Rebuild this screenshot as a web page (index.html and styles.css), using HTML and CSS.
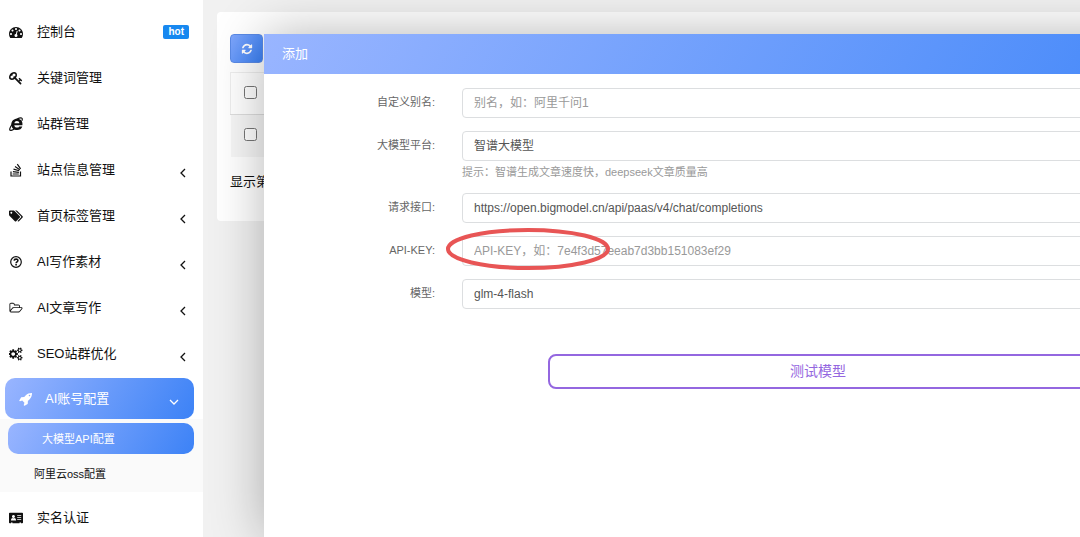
FILE: index.html
```html
<!DOCTYPE html>
<html lang="zh-CN">
<head>
    <meta charset="UTF-8">
    <meta name="viewport" content="width=device-width, initial-scale=1.0">
    <title>大模型API配置</title>
    <link rel="stylesheet" href="styles.css">
</head>
<body>
<!-- Sidebar -->
<nav class="sidebar">
    <ul class="menu">
        <li><a class="menu-item" href="#">
            <svg class="icon" viewBox="0 0 1792 1792"><path d="M384 1152q0-53-37.5-90.5t-90.5-37.5-90.5 37.5-37.5 90.5 37.5 90.5 90.5 37.5 90.5-37.5 37.5-90.5zm192-448q0-53-37.5-90.5t-90.5-37.5-90.5 37.5-37.5 90.5 37.5 90.5 90.5 37.5 90.5-37.5 37.5-90.5zm428 481l101-382q6-26-7.5-48.5t-38.5-29.5-48 6.5-30 39.5l-101 382q-60 5-107 43.5t-63 98.5q-20 77 20 146t117 89 146-20 89-117q16-60-6-117t-72-91zm660-33q0-53-37.5-90.5t-90.5-37.5-90.5 37.5-37.5 90.5 37.5 90.5 90.5 37.5 90.5-37.5 37.5-90.5zm-640-640q0-53-37.5-90.5t-90.5-37.5-90.5 37.5-37.5 90.5 37.5 90.5 90.5 37.5 90.5-37.5 37.5-90.5zm448 192q0-53-37.5-90.5t-90.5-37.5-90.5 37.5-37.5 90.5 37.5 90.5 90.5 37.5 90.5-37.5 37.5-90.5zm320 448q0 261-141 483-19 29-54 29h-1402q-35 0-54-29-141-221-141-483 0-182 71-348t191-286 286-191 348-71 348 71 286 191 191 286 71 348z"/></svg>
            <span class="menu-text">控制台</span>
            <span class="badge">hot</span>
        </a></li>
        <li><a class="menu-item" href="#">
            <svg class="icon" viewBox="0 0 1792 1792"><path d="M832 512q0-80-56-136t-136-56-136 56-56 136q0 42 19 83-41-19-83-19-80 0-136 56t-56 136 56 136 136 56 136-56 56-136q0-42-19-83 41 19 83 19 80 0 136-56t56-136zm851 704q0 17-49 66t-66 49q-9 0-28.5-16t-36.5-33-38.5-40-24.5-26l-96 96 220 220q28 28 28 68 0 42-39 81t-81 39q-40 0-68-28l-671-671q-176 131-365 131-163 0-265.5-102.5t-102.5-265.5q0-160 95-313t248-248 313-95q163 0 265.5 102.5t102.5 265.5q0 189-131 365l355 355 96-96q-3-3-26-24.5t-40-38.5-33-36.5-16-28.5q0-17 49-66t66-49q13 0 23 10 6 6 46 44.5t82 79.5 86.5 86 73 78 28.5 41z"/></svg>
            <span class="menu-text">关键词管理</span>
        </a></li>
        <li><a class="menu-item" href="#">
            <svg class="icon" viewBox="0 0 14 14"><path d="M5.300 8.300h8.100c.6-3.800-1.600-6.500-5.300-6.500-3.400 0-5.800 2.400-5.800 5.600s2.400 5.600 5.800 5.600c2.600 0 4.500-1.300 5.200-3.600h-3.100c-.4.800-1.100 1.200-2.100 1.200-1.600 0-2.700-.8-2.800-2.300zm.1-2c.2-1.400 1.200-2.200 2.500-2.200s2.300.8 2.500 2.200z" fill-rule="evenodd"/><path class="line" d="M3.500 6C6 3 10.500.2 12.600 1c.9.400.8 1.500.3 2.700M3 7.500C.8 10.500.2 12.800 1.200 13.300c.9.400 2.700-.4 4-1.300"/></svg>
            <span class="menu-text">站群管理</span>
        </a></li>
        <li><a class="menu-item" href="#">
            <svg class="icon" viewBox="0 0 14 14"><path class="line" d="M2 8.500v4.500h9.500V8.500M3.700 11h6.100M3.900 8.600l6 .7M4.500 6.100l5.700 1.700M6 3.600l4.800 3.100M8.300 1.200l3.300 4.700"/></svg>
            <span class="menu-text">站点信息管理</span>
            <svg class="arrow" viewBox="0 0 10 10"><path d="M7 1L3 5l4 4"/></svg>
        </a></li>
        <li><a class="menu-item" href="#">
            <svg class="icon" viewBox="0 0 1920 1792"><path d="M448 448q0-53-37.5-90.5t-90.5-37.5-90.5 37.5-37.5 90.5 37.5 90.5 90.5 37.5 90.5-37.5 37.5-90.5zm1067 576q0 53-37 90l-491 492q-39 37-91 37-53 0-90-37l-715-716q-38-37-64.5-101t-26.500-117v-416q0-52 38-90t90-38h416q53 0 117 26.500t102 64.500l715 714q37 39 37 91zm384 0q0 53-37 90l-491 492q-39 37-91 37-36 0-59-14t-53-45l470-470q37-37 37-90 0-52-37-91l-715-714q-38-38-102-64.500t-117-26.500h224q53 0 117 26.500t102 64.500l715 714q37 39 37 91z"/></svg>
            <span class="menu-text">首页标签管理</span>
            <svg class="arrow" viewBox="0 0 10 10"><path d="M7 1L3 5l4 4"/></svg>
        </a></li>
        <li><a class="menu-item" href="#">
            <svg class="icon" viewBox="0 0 14 14"><circle class="line" cx="7" cy="7" r="5.300"/><path class="line bold" d="M5.100 5.700C5.300 3.600 8.900 3.600 8.900 5.600 8.900 6.800 7.100 6.800 7.100 8.200M7.100 9.100v1.500"/></svg>
            <span class="menu-text">AI写作素材</span>
            <svg class="arrow" viewBox="0 0 10 10"><path d="M7 1L3 5l4 4"/></svg>
        </a></li>
        <li><a class="menu-item" href="#">
            <svg class="icon" viewBox="0 0 2048 1792"><path d="M1845 931q0-35-53-35h-1088q-40 0-85.500 21.500t-71.500 52.500l-294 363q-18 24-18 40 0 35 53 35h1088q40 0 86-22t71-53l294-363q18-22 18-39zm-1141-163h768v-160q0-40-28-68t-68-28h-576q-40 0-68-28t-28-68v-64q0-40-28-68t-68-28h-320q-40 0-68 28t-28 68v853l256-315q44-53 116-87.500t140-34.500zm1269 163q0 62-46 120l-295 363q-43 53-116 87.500t-140 34.500h-1088q-92 0-158-66t-66-158v-960q0-92 66-158t158-66h320q92 0 158 66t66 158v32h544q92 0 158 66t66 158v160h192q54 0 99 24.500t67 70.500q15 32 15 68z"/></svg>
            <span class="menu-text">AI文章写作</span>
            <svg class="arrow" viewBox="0 0 10 10"><path d="M7 1L3 5l4 4"/></svg>
        </a></li>
        <li><a class="menu-item" href="#">
            <svg class="icon" viewBox="0 0 1920 1792"><path d="M832 896q0-106-75-181t-181-75-181 75-75 181 75 181 181 75 181-75 75-181zm768 512q0-52-38-90t-90-38-90 38-38 90q0 53 37.500 90.500t90.500 37.500 90.500-37.500 37.500-90.500zm0-1024q0-52-38-90t-90-38-90 38-38 90q0 53 37.500 90.500t90.500 37.500 90.500-37.500 37.500-90.500zm-384 421v185q0 10-7 19.500t-16 10.500l-155 24q-11 35-32 76 34 48 90 115 7 11 7 20 0 12-7 19-23 30-82.500 89.500t-78.500 59.500q-11 0-21-7l-115-90q-37 19-77 31-11 108-23 155-7 24-30 24h-186q-11 0-20-7.500t-10-17.500l-23-153q-34-10-75-31l-118 89q-7 7-20 7-11 0-21-8-144-133-144-160 0-9 7-19 10-14 41-53t47-61q-23-44-35-82l-152-24q-10-1-17-9.500t-7-19.500v-185q0-10 7-19.500t16-10.500l155-24q11-35 32-76-34-48-90-115-7-11-7-20 0-12 7-20 22-30 82-89t79-59q11 0 21 7l115 90q34-18 77-32 11-108 23-154 7-24 30-24h186q11 0 20 7.500t10 17.500l23 153q34 10 75 31l118-89q8-7 20-7 11 0 21 8 144 133 144 160 0 8-7 19-12 16-42 54t-45 60q23 48 34 82l152 23q10 2 17 10.500t7 19.500zm640 533v140q0 16-149 31-12 27-30 52 51 113 51 138 0 4-4 7-122 71-124 71-8 0-46-47t-52-68q-20 2-30 2t-30-2q-14 21-52 68t-46 47q-2 0-124-71-4-3-4-7 0-25 51-138-18-25-30-52-149-15-149-31v-140q0-16 149-31 13-29 30-52-51-113-51-138 0-4 4-7 4-2 35-20t59-34 30-16q8 0 46 46.500t52 67.500q20-2 30-2t30 2q51-71 92-112l6-2q4 0 124 70 4 3 4 7 0 25-51 138 17 23 30 52 149 15 149 31zm0-1024v140q0 16-149 31-12 27-30 52 51 113 51 138 0 4-4 7-122 71-124 71-8 0-46-47t-52-68q-20 2-30 2t-30-2q-14 21-52 68t-46 47q-2 0-124-71-4-3-4-7 0-25 51-138-18-25-30-52-149-15-149-31v-140q0-16 149-31 13-29 30-52-51-113-51-138 0-4 4-7 4-2 35-20t59-34 30-16q8 0 46 46.500t52 67.500q20-2 30-2t30 2q51-71 92-112l6-2q4 0 124 70 4 3 4 7 0 25-51 138 17 23 30 52 149 15 149 31z"/></svg>
            <span class="menu-text">SEO站群优化</span>
            <svg class="arrow" viewBox="0 0 10 10"><path d="M7 1L3 5l4 4"/></svg>
        </a></li>
        <li>
            <a class="menu-item active" href="#">
                <svg class="icon" viewBox="0 0 1792 1792"><path d="M1440 448q0-40-28-68t-68-28-68 28-28 68 28 68 68 28 68-28 28-68zm224-288q0 249-75.500 430.500t-253.500 360.500q-81 80-195 176l-20 379q-2 16-16 26l-384 224q-7 4-16 4-12 0-23-9l-64-64q-13-14-8-32l85-276-281-281-276 85q-3 1-9 1-14 0-23-9l-64-64q-17-19-5-39l224-384q10-14 26-16l379-20q96-114 176-195 188-187 358-258t431-71q14 0 24 9.500t10 22.500z"/></svg>
                <span class="menu-text">AI账号配置</span>
                <svg class="arrow" viewBox="0 0 10 10"><path d="M1 3l4 4 4-4"/></svg>
            </a>
            <ul class="submenu">
                <li><a class="submenu-item current" href="#">大模型API配置</a></li>
                <li><a class="submenu-item" href="#">阿里云oss配置</a></li>
            </ul>
        </li>
        <li><a class="menu-item" href="#">
            <svg class="icon" viewBox="0 0 14 14"><path fill-rule="evenodd" d="M.8 1.800h12.400q.8 0 .8.800v8.800q0 .8-.8.800h-1.200v-.6h-1.500v.6h-7v-.6h-1.500v.6H.8q-.8 0-.8-.8V2.600q0-.8.800-.8zM4.400 3.900a1.500 1.600 0 1 0 .1 0zM1.900 9.500h5.200q0-2.500-1.500-2.500-1.100.700-2.200 0-1.500 0-1.500 2.500zM8.200 4.200v.9h4v-.9zM8.200 6.200v.9h4v-.9zM8.200 8.200v.9h4v-.9z"/></svg>
            <span class="menu-text">实名认证</span>
        </a></li>
    </ul>
</nav>

<!-- List page behind the dialog -->
<main class="content">
    <section class="panel">
        <button class="refresh-btn" type="button" aria-label="刷新">
            <svg viewBox="0 0 1792 1792"><path d="M1639 1056q0 5-1 7-64 268-268 434.500t-478 166.500q-146 0-282.500-55t-243.500-157l-129 129q-19 19-45 19t-45-19-19-45v-448q0-26 19-45t45-19h448q26 0 45 19t19 45-19 45l-137 137q71 66 161 102t187 36q134 0 250-65t186-179q11-17 53-117 8-23 30-23h192q13 0 22.500 9.500t9.500 22.500zm25-800v448q0 26-19 45t-45 19h-448q-26 0-45-19t-19-45 19-45l138-138q-148-137-349-137-134 0-250 65t-186 179q-11 17-53 117-8 23-30 23h-199q-13 0-22.500-9.500t-9.500-22.500v-7q65-268 270-434.500t480-166.500q146 0 284 55.500t245 156.500l130-129q19-19 45-19t45 19 19 45z"/></svg>
        </button>
        <table class="list">
            <thead>
                <tr><th><input type="checkbox" aria-label="全选"></th></tr>
            </thead>
            <tbody>
                <tr><td><input type="checkbox" aria-label="选择"></td></tr>
            </tbody>
        </table>
        <p class="page-info">显示第</p>
    </section>
</main>

<!-- Add dialog -->
<div class="dialog" role="dialog" aria-labelledby="dialog-title">
    <h2 class="dialog-title" id="dialog-title">添加</h2>
    <form class="form">
        <div class="form-row">
            <label for="alias">自定义别名:</label>
            <input class="field" type="text" id="alias" placeholder="别名，如：阿里千问1">
        </div>
        <div class="form-row">
            <label for="platform">大模型平台:</label>
            <div class="field-group">
                <select class="field" id="platform">
                    <option>智谱大模型</option>
                </select>
                <p class="hint">提示：智谱生成文章速度快，deepseek文章质量高</p>
            </div>
        </div>
        <div class="form-row">
            <label for="api-url">请求接口:</label>
            <input class="field" type="text" id="api-url" value="https://open.bigmodel.cn/api/paas/v4/chat/completions">
        </div>
        <div class="form-row marked">
            <label for="api-key">API-KEY:</label>
            <input class="field" type="text" id="api-key" placeholder="API-KEY，如：7e4f3d57eeab7d3bb151083ef29">
            <svg class="marker" viewBox="0 0 166 44"><ellipse cx="83" cy="22" rx="80" ry="19"/></svg>
        </div>
        <div class="form-row">
            <label for="model">模型:</label>
            <input class="field" type="text" id="model" value="glm-4-flash">
        </div>
        <button class="test-btn" type="button">测试模型</button>
    </form>
</div>
</body>
</html>
```

FILE: styles.css
```css
:root {
    --blue-start: #99b5ff;
    --blue-end: #3c82f6;
    --purple: #9467e0;
    --border: #dcdee0;
    --text: #111;
}

* {
    box-sizing: border-box;
}

body {
    margin: 0;
    min-height: 100vh;
    display: flex;
    position: relative;
    overflow: hidden;
    font-family: "Liberation Sans", "Noto Sans CJK SC", sans-serif;
    font-size: 13px;
    color: var(--text);
    background: #f1f1f1;
}

ul {
    margin: 0;
    padding: 0;
    list-style: none;
}

a {
    color: inherit;
    text-decoration: none;
}

button, input, select {
    font-family: inherit;
}

/* Sidebar */
.sidebar {
    width: 203px;
    height: 100vh;
    flex-shrink: 0;
    overflow: hidden;
    background: #fff;
    z-index: 3;
}

.menu {
    padding-top: 9px;
}

.menu-item {
    display: flex;
    align-items: center;
    height: 46px;
    padding: 0 14px 1px 9px;
}

.icon {
    width: 14px;
    height: 14px;
    margin-right: 14px;
    fill: currentColor;
}

.icon .line {
    fill: none;
    stroke: currentColor;
    stroke-width: 1.2;
}

.icon .bold {
    stroke-width: 1.6;
}

.menu-text {
    flex: 1;
    padding-bottom: 2px;
}

.badge {
    padding: 0 5px;
    border-radius: 2px;
    font-size: 10px;
    line-height: 14px;
    font-weight: bold;
    color: #fff;
    background: #1788f0;
}

.arrow {
    width: 10px;
    height: 10px;
    margin: 7px 1px 0 0;
    fill: none;
    stroke: currentColor;
    stroke-width: 1.3;
}

.menu-item.active {
    height: 41px;
    margin: 1px 9px 0 5px;
    padding: 0 14px;
    border-radius: 10px;
    color: #fff;
    background: linear-gradient(120deg, var(--blue-start), var(--blue-end));
}

.active .icon {
    margin-right: 12px;
}

.submenu {
    padding: 4px 9px 0 8px;
    margin-bottom: 3px;
    background: #fafafa;
}

.submenu-item {
    display: flex;
    align-items: center;
    height: 38px;
    padding: 0 0 1px 26px;
    font-size: 11px;
}

.submenu-item.current {
    height: 31px;
    padding-left: 34px;
    border-radius: 10px;
    color: #fff;
    background: linear-gradient(120deg, var(--blue-start), var(--blue-end));
}

/* List page */
.content {
    flex: 1;
    padding: 12px 0 12px 14px;
}

.panel {
    padding: 22px 13px;
    border-radius: 4px 0 0 4px;
    background: #fff;
}

.refresh-btn {
    display: flex;
    align-items: center;
    justify-content: center;
    width: 33px;
    height: 29px;
    padding: 0;
    border: 1px solid #5a8ae6;
    border-radius: 4px;
    background: linear-gradient(120deg, #7fa6fb, var(--blue-end));
}

.refresh-btn svg {
    width: 12px;
    height: 12px;
    fill: #fff;
}

.list {
    width: 100%;
    margin-top: 9px;
    border-collapse: collapse;
}

.list th, .list td {
    height: 42px;
    padding: 0 13px 2px;
    text-align: left;
    vertical-align: middle;
}

.list th {
    border: 1px solid #eee;
    border-bottom-color: #ddd;
}

.list td {
    background: #f6f6f6;
}

.list input {
    display: block;
    width: 13px;
    height: 13px;
    margin: 0;
}

.page-info {
    margin: 15px 0 7px;
    line-height: 20px;
}

/* Dialog */
.dialog {
    position: absolute;
    top: 34px;
    bottom: 0;
    left: 264px;
    right: -292px;
    background: #fff;
    box-shadow: 1px 1px 50px rgba(0, 0, 0, 0.3);
    z-index: 2;
}

.dialog-title {
    margin: 0;
    padding: 0 18px;
    font-size: 13px;
    font-weight: normal;
    line-height: 40px;
    color: #fff;
    background: linear-gradient(120deg, var(--blue-start), #4d8dfa 75%, var(--blue-end));
}

.form {
    display: flex;
    flex-direction: column;
    gap: 13px;
    padding: 14px;
    font-size: 11px;
    color: #666;
}

.form-row {
    display: flex;
    align-items: flex-start;
    gap: 27px;
}

.form-row label {
    width: 157px;
    flex-shrink: 0;
    line-height: 28px;
    text-align: right;
}

.field {
    flex: 1;
    width: 100%;
    height: 30px;
    padding: 0 11px;
    border: 1px solid var(--border);
    border-radius: 4px;
    font-size: 12px;
    color: #555;
    background: #fff;
    appearance: none;
}

.field::placeholder {
    color: #999;
}

.field-group {
    flex: 1;
}

.field-group .field {
    display: block;
}

.hint {
    margin: 4px 0 0;
    line-height: 15px;
    color: #999;
}

.marked {
    position: relative;
}

/* Hand-drawn ring over the key field */
.marker {
    position: absolute;
    top: -9px;
    left: 167px;
    width: 166px;
    height: 44px;
    fill: none;
    stroke: #e85555;
    stroke-width: 4;
    pointer-events: none;
}

.test-btn {
    width: 50%;
    height: 35px;
    margin: 32px auto 0;
    padding: 0 0 3px;
    border: 2px solid var(--purple);
    border-radius: 8px;
    font-size: 14px;
    color: var(--purple);
    background: #fff;
}
```
